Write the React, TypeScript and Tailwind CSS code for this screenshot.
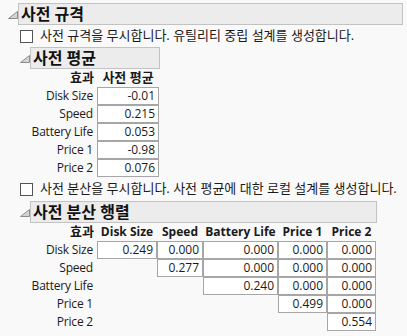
import React from 'react'

const FONT = { fontFamily: '"Open Sans", "Noto Sans CJK KR", sans-serif' }

function Disclosure() {
  return (
    <svg width="10" height="8" viewBox="0 0 10 8" className="mt-[8px] shrink-0">
      <polygon points="0.5,7.5 9.5,0.5 9.5,7.5" fill="#d4d4d4" stroke="#8c8c8c" strokeWidth="1" />
    </svg>
  )
}

function SectionHeader({ title, width, indent }: { title: string; width: string; indent: string }) {
  return (
    <div className={`flex items-start ${indent}`}>
      <Disclosure />
      <div
        className={`flex h-[22px] items-center whitespace-nowrap border border-[#c2c2c2] bg-[#ececec] pl-[2px] text-[16px] font-bold text-[#111] ${width}`}
      >
        {title}
      </div>
    </div>
  )
}

function CheckRow({ label, height }: { label: string; height: string }) {
  return (
    <div className={`flex items-center gap-[7px] pl-[20px] ${height}`}>
      <div className="h-[13px] w-[13px] shrink-0 border border-[#555] bg-white" />
      <span className="whitespace-nowrap text-[13px] text-[#1a1a1a]">{label}</span>
    </div>
  )
}

const labels = ['Disk Size', 'Speed', 'Battery Life', 'Price 1', 'Price 2']
const means = ['-0.01', '0.215', '0.053', '-0.98', '0.076']

const cols = [
  { name: 'Disk Size', w: 'w-[60px]' },
  { name: 'Speed', w: 'w-[46px]' },
  { name: 'Battery Life', w: 'w-[75px]' },
  { name: 'Price 1', w: 'w-[49px]' },
  { name: 'Price 2', w: 'w-[49px]' },
]

const matrix = [
  ['0.249', '0.000', '0.000', '0.000', '0.000'],
  ['', '0.277', '0.000', '0.000', '0.000'],
  ['', '', '0.240', '0.000', '0.000'],
  ['', '', '', '0.499', '0.000'],
  ['', '', '', '', '0.554'],
]

function Cell({ value, w }: { value: string; w: string }) {
  if (!value) return <div className={`h-[18px] shrink-0 ${w}`} />
  return (
    <div
      className={`flex h-[18px] shrink-0 items-center justify-end border border-[#a6a6a6] bg-white pr-[3px] ${w}`}
    >
      {value}
    </div>
  )
}

function RowLabel({ text }: { text: string }) {
  return <div className="w-[67px] shrink-0 whitespace-nowrap pr-[4px] text-right tracking-[-0.2px]">{text}</div>
}

export default function App() {
  return (
    <div style={FONT} className="h-[336px] w-[407px] overflow-hidden bg-[#f9f9f9] pt-[3px] text-[12px] text-[#1a1a1a]">
      <SectionHeader title="사전 규격" width="w-[385px]" indent="pl-[8px]" />
      <CheckRow label="사전 규격을 무시합니다. 유틸리티 중립 설계를 생성합니다." height="h-[22px]" />

      <SectionHeader title="사전 평균" width="w-[130px]" indent="pl-[20px]" />
      <div className="pl-[30px]">
        <div className="flex h-[18px] items-center text-[13px] font-bold">
          <div className="w-[67px] shrink-0 pr-[3px] text-right">효과</div>
          <div className="w-[62px] shrink-0 whitespace-nowrap text-center">사전 평균</div>
        </div>
        {labels.map((l, i) => (
          <div key={l} className="flex h-[18px] items-center">
            <RowLabel text={l} />
            <Cell value={means[i]} w="w-[62px]" />
          </div>
        ))}
      </div>

      <CheckRow label="사전 분산을 무시합니다. 사전 평균에 대한 로컬 설계를 생성합니다." height="h-[24px]" />

      <SectionHeader title="사전 분산 행렬" width="w-[347px]" indent="pl-[20px]" />
      <div className="pl-[30px]">
        <div className="flex h-[18px] items-center font-bold">
          <div className="w-[67px] shrink-0 pr-[3px] text-right text-[13px]">효과</div>
          {cols.map((c) => (
            <div key={c.name} className={`shrink-0 whitespace-nowrap text-center ${c.w}`}>
              {c.name}
            </div>
          ))}
        </div>
        {labels.map((l, i) => (
          <div key={l} className="flex h-[18px] items-center">
            <RowLabel text={l} />
            {cols.map((c, j) => (
              <Cell key={c.name} value={matrix[i][j]} w={c.w} />
            ))}
          </div>
        ))}
      </div>
    </div>
  )
}
